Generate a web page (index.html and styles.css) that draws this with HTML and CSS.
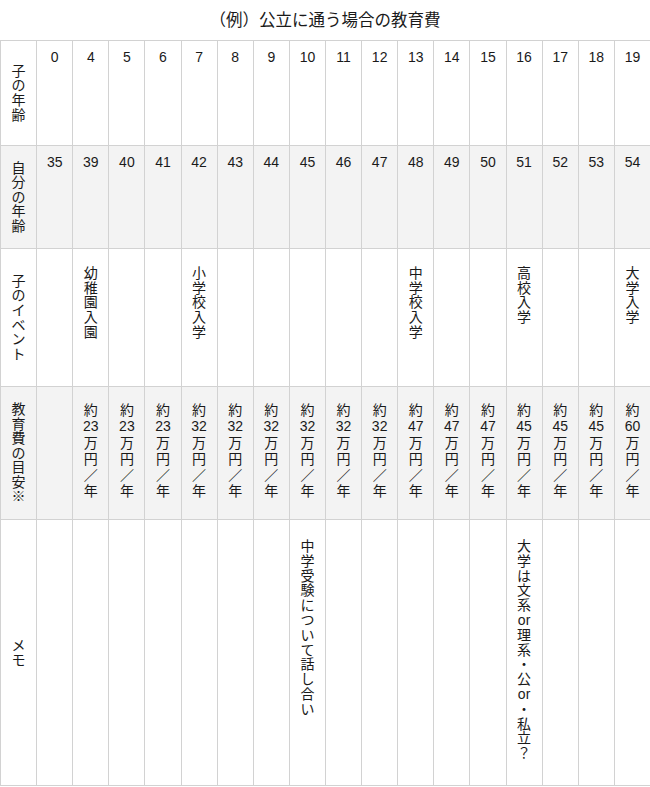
FILE: index.html
```html
<!DOCTYPE html>
<html lang="ja">
<head>
<meta charset="utf-8">
<title>（例）公立に通う場合の教育費</title>
<link rel="stylesheet" href="styles.css">
</head>
<body>
<div class="title">（例）公立に通う場合の教育費</div>
<table class="plan">
  <tr class="r-age">
    <th>子<br>の<br>年<br>齢</th>
    <td>0</td><td>4</td><td>5</td><td>6</td><td>7</td><td>8</td><td>9</td><td>10</td><td>11</td><td>12</td><td>13</td><td>14</td><td>15</td><td>16</td><td>17</td><td>18</td><td>19</td>
  </tr>
  <tr class="r-self gray">
    <th>自<br>分<br>の<br>年<br>齢</th>
    <td>35</td><td>39</td><td>40</td><td>41</td><td>42</td><td>43</td><td>44</td><td>45</td><td>46</td><td>47</td><td>48</td><td>49</td><td>50</td><td>51</td><td>52</td><td>53</td><td>54</td>
  </tr>
  <tr class="r-event">
    <th>子<br>の<br>イ<br>ベ<br>ン<br>ト</th>
    <td></td>
    <td>幼<br>稚<br>園<br>入<br>園</td>
    <td></td><td></td>
    <td>小<br>学<br>校<br>入<br>学</td>
    <td></td><td></td><td></td><td></td><td></td>
    <td>中<br>学<br>校<br>入<br>学</td>
    <td></td><td></td>
    <td>高<br>校<br>入<br>学</td>
    <td></td><td></td>
    <td>大<br>学<br>入<br>学</td>
  </tr>
  <tr class="r-cost gray">
    <th>教<br>育<br>費<br>の<br>目<br>安<br>※</th>
    <td></td>
    <td>約<br>23<br>万<br>円<br>／<br>年</td>
    <td>約<br>23<br>万<br>円<br>／<br>年</td>
    <td>約<br>23<br>万<br>円<br>／<br>年</td>
    <td>約<br>32<br>万<br>円<br>／<br>年</td>
    <td>約<br>32<br>万<br>円<br>／<br>年</td>
    <td>約<br>32<br>万<br>円<br>／<br>年</td>
    <td>約<br>32<br>万<br>円<br>／<br>年</td>
    <td>約<br>32<br>万<br>円<br>／<br>年</td>
    <td>約<br>32<br>万<br>円<br>／<br>年</td>
    <td>約<br>47<br>万<br>円<br>／<br>年</td>
    <td>約<br>47<br>万<br>円<br>／<br>年</td>
    <td>約<br>47<br>万<br>円<br>／<br>年</td>
    <td>約<br>45<br>万<br>円<br>／<br>年</td>
    <td>約<br>45<br>万<br>円<br>／<br>年</td>
    <td>約<br>45<br>万<br>円<br>／<br>年</td>
    <td>約<br>60<br>万<br>円<br>／<br>年</td>
  </tr>
  <tr class="r-memo">
    <th>メ<br>モ</th>
    <td></td><td></td><td></td><td></td><td></td><td></td><td></td>
    <td>中<br>学<br>受<br>験<br>に<br>つ<br>い<br>て<br>話<br>し<br>合<br>い</td>
    <td></td><td></td><td></td><td></td><td></td>
    <td>大<br>学<br>は<br>文<br>系<br>or<br>理<br>系<br>・<br>公<br>or<br>・<br>私<br>立<br>？</td>
    <td></td><td></td><td></td>
  </tr>
</table>
</body>
</html>
```

FILE: styles.css
```css
html, body {
  margin: 0;
  padding: 0;
  overflow: hidden;
  background: #ffffff;
}

body {
  font-family: "Liberation Sans", "Noto Sans CJK JP", sans-serif;
  color: #1a1a1a;
  width: 650px;
}

.title {
  box-sizing: border-box;
  height: 40px;
  padding-top: 11px;
  font-size: 16.5px;
  line-height: 18px;
  text-align: center;
}

.plan {
  width: 651px;
  table-layout: fixed;
  border-collapse: collapse;
  font-size: 14px;
}

.plan th,
.plan td {
  border: 1px solid #d2d2d2;
  padding: 0;
  text-align: center;
  vertical-align: top;
  font-weight: normal;
}

.plan th {
  vertical-align: middle;
  line-height: 14.6px;
}

.gray th,
.gray td {
  background: #f3f3f3;
}

.r-age { height: 105px; }
.r-self { height: 103px; }
.r-event { height: 138px; }
.r-cost { height: 133px; }
.r-memo { height: 266px; }

.r-age td,
.r-self td {
  padding-top: 8px;
  line-height: 16px;
}

.r-event td {
  padding-top: 17px;
  line-height: 14.7px;
}

.r-cost td {
  padding-top: 15px;
  line-height: 16.3px;
}

.r-memo td {
  padding-top: 19px;
  line-height: 14.8px;
}
```
